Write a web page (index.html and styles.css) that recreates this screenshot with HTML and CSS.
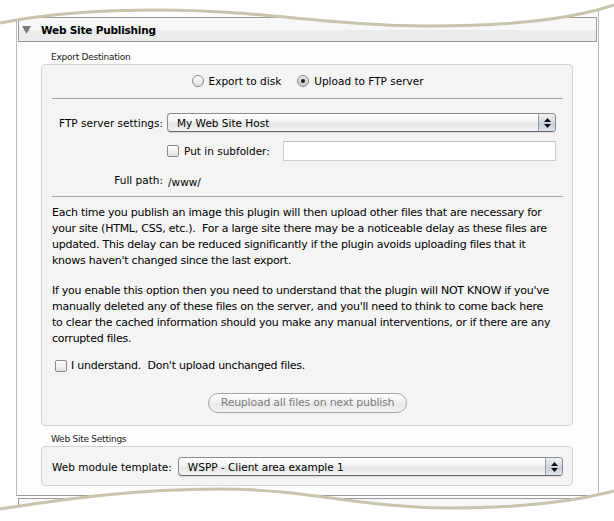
FILE: index.html
```html
<!DOCTYPE html>
<html lang="en">
<head>
  <meta charset="UTF-8" />
  <title>Web Site Publishing</title>
  <link rel="stylesheet" href="styles.css">
</head>
<body>
  <div class="sheet">
    <div class="panel">
      <div class="panel-head">
        <svg class="disclosure" width="9" height="8" viewBox="0 0 9 8"><polygon points="0,0 9,0 4.5,8" fill="#7b7b7b"/></svg>
        <span>Web Site Publishing</span>
      </div>

      <div class="panel-body">
        <div class="group-label">Export Destination</div>
        <div class="group export">
          <div class="radio-row">
            <label class="radio"><span class="radio-mark"></span>Export to disk</label>
            <label class="radio"><span class="radio-mark on"></span>Upload to FTP server</label>
          </div>
          <div class="divider"></div>

          <div class="form-grid">
            <span class="field-label">FTP server settings:</span>
            <div class="select">
              <span class="select-value">My Web Site Host</span>
              <span class="stepper">
                <svg width="7" height="10" viewBox="0 0 7 10"><polygon points="3.5,0 7,4 0,4" fill="#111"/><polygon points="0,6 7,6 3.5,10" fill="#111"/></svg>
              </span>
            </div>

            <span></span>
            <div class="sub-row">
              <span class="check"></span>
              <span>Put in subfolder:</span>
              <span class="text-field"></span>
            </div>

            <span class="field-label">Full path:</span>
            <span class="path">/www/</span>
          </div>
          <div class="divider lower"></div>

          <p>Each time you publish an image this plugin will then upload other files that are necessary for<br>your site (HTML, CSS, etc.).&nbsp; For a large site there may be a noticeable delay as these files are<br>updated. This delay can be reduced significantly if the plugin avoids uploading files that it<br>knows haven't changed since the last export.</p>
          <p>If you enable this option then you need to understand that the plugin will NOT KNOW if you've<br>manually deleted any of these files on the server, and you'll need to think to come back here<br>to clear the cached information should you make any manual interventions, or if there are any<br>corrupted files.</p>

          <label class="check-row"><span class="check"></span>I understand.&nbsp; Don't upload unchanged files.</label>

          <div class="button-row">
            <span class="push-button">Reupload all files on next publish</span>
          </div>
        </div>

        <div class="group-label second">Web Site Settings</div>
        <div class="group settings">
          <div class="template-row">
            <span>Web module template:</span>
            <div class="select">
              <span class="select-value">WSPP - Client area example 1</span>
              <span class="stepper">
                <svg width="7" height="10" viewBox="0 0 7 10"><polygon points="3.5,0 7,4 0,4" fill="#111"/><polygon points="0,6 7,6 3.5,10" fill="#111"/></svg>
              </span>
            </div>
          </div>
        </div>
      </div>
    </div>
    <div class="next-panel"></div>

    <!-- torn paper edges over the screenshot -->
    <svg class="tear tear-top" width="614" height="34" viewBox="0 0 614 34">
      <path d="M0,0 L614,0 L614,5 C570,20 510,26 430,26 C330,26 260,10 160,10 C90,10 40,15 0,23 Z" fill="#fff"/>
      <path d="M0,23 C40,15 90,10 160,10 C260,10 330,26 430,26 C510,26 570,20 614,5" fill="none" stroke="#c8c4ad" stroke-width="3"/>
    </svg>
    <svg class="tear tear-bottom" width="614" height="36" viewBox="0 485 614 36">
      <path d="M0,509 C60,500 130,489 220,489 C310,489 360,508 450,508 C530,508 580,500 614,491 L614,521 L0,521 Z" fill="#fff"/>
      <path d="M0,509 C60,500 130,489 220,489 C310,489 360,508 450,508 C530,508 580,500 614,491" fill="none" stroke="#c8c4ad" stroke-width="3"/>
    </svg>
  </div>
</body>
</html>
```

FILE: styles.css
```css
body {
  margin: 0;
  background: #fff;
  color: #000;
  font-family: "DejaVu Sans", sans-serif;
  font-size: 10.5px;
}

.sheet {
  position: relative;
  height: 521px;
  overflow: hidden;
  padding-top: 10px;
  box-sizing: border-box;
}

.panel {
  margin-left: 16px;
  width: 579px;
  padding: 7px 1px 0;
  border-left: 1px solid #bcbcbc;
  border-right: 1px solid #bcbcbc;
  border-bottom: 1px solid #9c9c9c;
  background: #fdfdfd;
}

.panel-head {
  height: 23px;
  border: 1px solid #9a9a9a;
  background: linear-gradient(#f7f7f7 0, #f7f7f7 12px, #ebebeb 12px, #ebebeb 100%);
  display: flex;
  align-items: center;
  gap: 10px;
  padding-left: 3px;
  font-weight: bold;
  font-size: 10.5px;
  letter-spacing: -0.2px;
}

.panel-body {
  padding: 0 24px 9px 23px;
}

.group-label {
  margin-top: 9px;
  line-height: 13px;
  padding-left: 10px;
  font-size: 9px;
  letter-spacing: -0.25px;
  color: #222;
}

.group-label.second {
  margin-top: 7px;
}

.group {
  border: 1px solid #d2d2d2;
  border-radius: 4px;
  background: #f4f4f4;
  padding: 0 9px 0 10px;
}

.export {
  padding-top: 7px;
  padding-bottom: 12px;
}

.radio-row {
  display: flex;
  justify-content: center;
  gap: 16px;
  height: 18px;
  align-items: center;
}

.radio {
  display: flex;
  align-items: center;
  gap: 5px;
}

.radio-mark {
  width: 10px;
  height: 10px;
  border: 1px solid #8a8a8a;
  border-radius: 50%;
  background: linear-gradient(#fcfcfc, #e0e0e0);
  display: flex;
  align-items: center;
  justify-content: center;
}

.radio-mark.on {
  background: linear-gradient(#e4e4e4, #c9c9c9);
}

.radio-mark.on::after {
  content: "";
  width: 4px;
  height: 4px;
  border-radius: 50%;
  background: #222;
}

.divider {
  border-top: 1px solid #a6a6a6;
  margin-top: 8px;
}

.divider.lower {
  margin-top: 7px;
}

.form-grid {
  display: grid;
  grid-template-columns: 111px 1fr;
  column-gap: 4px;
  row-gap: 9px;
  align-items: center;
  margin-top: 14px;
  padding-right: 7px;
}

.field-label {
  text-align: right;
}

.path {
  padding-left: 1px;
  line-height: 14px;
  margin-top: 5px;
}

.select {
  display: flex;
  align-items: center;
  height: 19px;
  box-sizing: border-box;
  border: 1px solid #8c8c8c;
  border-bottom-color: #6a6a6a;
  border-radius: 4px;
  background: linear-gradient(#ffffff, #f4f4f4 45%, #e6e6e6 55%, #f2f2f2);
  box-shadow: 0 1px 1px rgba(0, 0, 0, 0.12);
  overflow: hidden;
}

.select-value {
  flex: 1;
  padding-left: 9px;
}

.stepper {
  width: 16px;
  height: 100%;
  border-left: 1px solid #9a9a9a;
  background: linear-gradient(#eef1f5, #d3d9e2 50%, #c6cdd8 51%, #dde2ea);
  display: flex;
  align-items: center;
  justify-content: center;
}

.sub-row {
  display: flex;
  align-items: center;
  gap: 5px;
}

.check {
  width: 10px;
  height: 10px;
  border: 1px solid #8a8a8a;
  border-radius: 2px;
  background: linear-gradient(#fdfdfd, #e3e3e3);
  flex: none;
}

.text-field {
  margin-left: 8px;
  flex: 1;
  height: 18px;
  border: 1px solid #cbcbcb;
  border-top-color: #bdbdbd;
  background: #fff;
}

p {
  margin: 8px 0 0;
  line-height: 16px;
  white-space: nowrap;
  font-size: 11px;
  letter-spacing: -0.25px;
}

p + p {
  margin-top: 14px;
}

.check-row {
  display: flex;
  align-items: center;
  gap: 4px;
  margin-top: 12px;
  padding-left: 3px;
  line-height: 14px;
  font-size: 11px;
  letter-spacing: -0.25px;
}

.button-row {
  display: flex;
  justify-content: center;
  margin-top: 20px;
}

.push-button {
  height: 18px;
  line-height: 18px;
  padding: 0 12px;
  border: 1px solid #a4a4a4;
  border-radius: 10px;
  background: linear-gradient(#fdfdfd, #f1f1f1 50%, #e8e8e8 51%, #f3f3f3);
  color: #7e7e7e;
  font-size: 11px;
  letter-spacing: -0.25px;
}

.settings {
  padding-top: 10px;
  padding-bottom: 9px;
}

.template-row {
  display: flex;
  align-items: center;
  gap: 6px;
}

.template-row .select {
  flex: 1;
}

.next-panel {
  margin: 2px 0 0 18px;
  width: 577px;
  height: 40px;
  border: 1px solid #9c9c9c;
  background: #f7f7f7;
}

.tear {
  position: absolute;
  left: 0;
}

.tear-top {
  top: 0;
}

.tear-bottom {
  top: 485px;
}
```
